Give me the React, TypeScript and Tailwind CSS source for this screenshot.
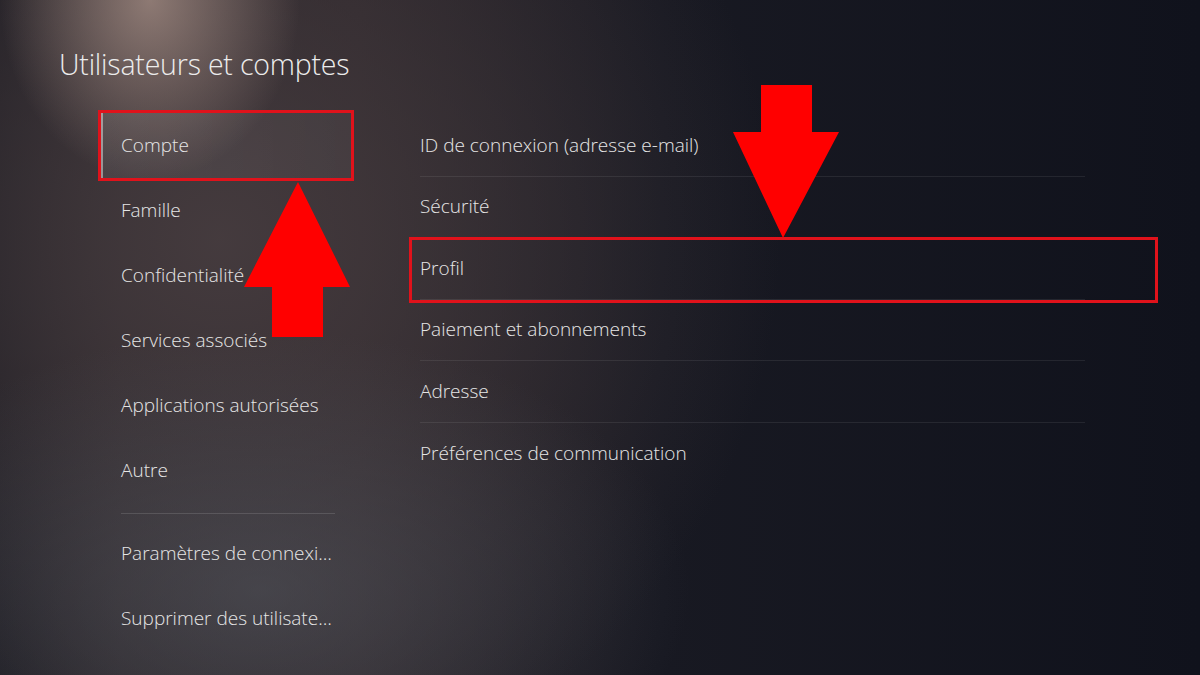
import React from "react";

const leftTop = ["Compte", "Famille", "Confidentialité", "Services associés", "Applications autorisées", "Autre"];
const leftBottom = ["Paramètres de connexi…", "Supprimer des utilisate…"];
const rightItems = [
  "ID de connexion (adresse e-mail)",
  "Sécurité",
  "Profil",
  "Paiement et abonnements",
  "Adresse",
  "Préférences de communication",
];

export default function App() {
  return (
    <div
      className="relative w-[1200px] h-[675px] overflow-hidden text-[#e6e6e6] bg-[#12141e] bg-[radial-gradient(150px_180px_at_150px_0px,rgba(175,150,140,0.72),transparent),radial-gradient(430px_260px_at_260px_590px,rgba(85,88,96,0.55),transparent),radial-gradient(560px_560px_at_220px_240px,rgba(70,60,63,0.95),transparent),linear-gradient(90deg,#17171e_0%,#262227_10%,#2a2429_30%,#181922_55%,#10121c_100%)]"
      style={{ fontFamily: '"Open Sans", "Noto Sans", sans-serif' }}
    >
      <div className="pl-[59px] pt-[46px]">
        <h1 className="text-[28.5px] leading-[36px] font-light tracking-[-0.2px] text-[#ececec]">
          Utilisateurs et comptes
        </h1>
      </div>

      <div className="flex pl-[101px] mt-[31px]">
        {/* Left menu */}
        <div className="w-[250px] flex flex-col">
          {leftTop.map((label, i) => (
            <div
              key={label}
              className={
                i === 0
                  ? "relative h-[65px] flex items-center pl-[20px] text-[19px] font-light bg-[linear-gradient(90deg,rgba(255,255,255,0.07),rgba(255,255,255,0.04))] border-l-2 border-l-[rgba(255,255,255,0.45)]"
                  : "h-[65px] flex items-center pl-[20px] text-[19px] font-light"
              }
            >
              <span className={i === 0 ? "-ml-[2px] -mt-[1px]" : "-mt-[1px]"}>{label}</span>
              {i === 0 && (
                <div className="absolute -top-[3px] -bottom-[3px] -left-[5px] -right-[3px] border-[3px] border-[#e0121b] pointer-events-none" />
              )}
            </div>
          ))}
          <div className="ml-[20px] mr-[16px] my-[10px] h-px bg-[rgba(255,255,255,0.13)]" />
          <div className="-mt-[3px]">
            {leftBottom.map((label) => (
              <div key={label} className="h-[65px] flex items-center pl-[20px] text-[19px] font-light whitespace-nowrap">
                <span className="-mt-[1px]">{label}</span>
              </div>
            ))}
          </div>
        </div>

        {/* Right list */}
        <div className="ml-[69px] w-[665px] mt-[2px] flex flex-col">
          {rightItems.map((label, i) => (
            <div
              key={label}
              className={
                "relative h-[61.5px] flex items-center text-[19px] font-light " +
                (i < rightItems.length - 1 ? "border-b border-b-[rgba(255,255,255,0.08)]" : "")
              }
            >
              <span className="-mt-[1px]">{label}</span>
              {i === 2 && (
                <div className="absolute -top-[1px] -bottom-[4px] -left-[11px] -right-[73px] border-[3px] border-[#e0121b] pointer-events-none" />
              )}
            </div>
          ))}
        </div>
      </div>

      {/* Annotation arrows */}
      <svg className="absolute inset-0 pointer-events-none" width="1200" height="675" viewBox="0 0 1200 675">
        <polygon points="298,182 350,287 323,287 323,337 272,337 272,287 244,287" fill="#ff0000" />
        <polygon points="761,85 812,85 812,132 839,132 783,238 733,132 761,132" fill="#ff0000" />
      </svg>
    </div>
  );
}
